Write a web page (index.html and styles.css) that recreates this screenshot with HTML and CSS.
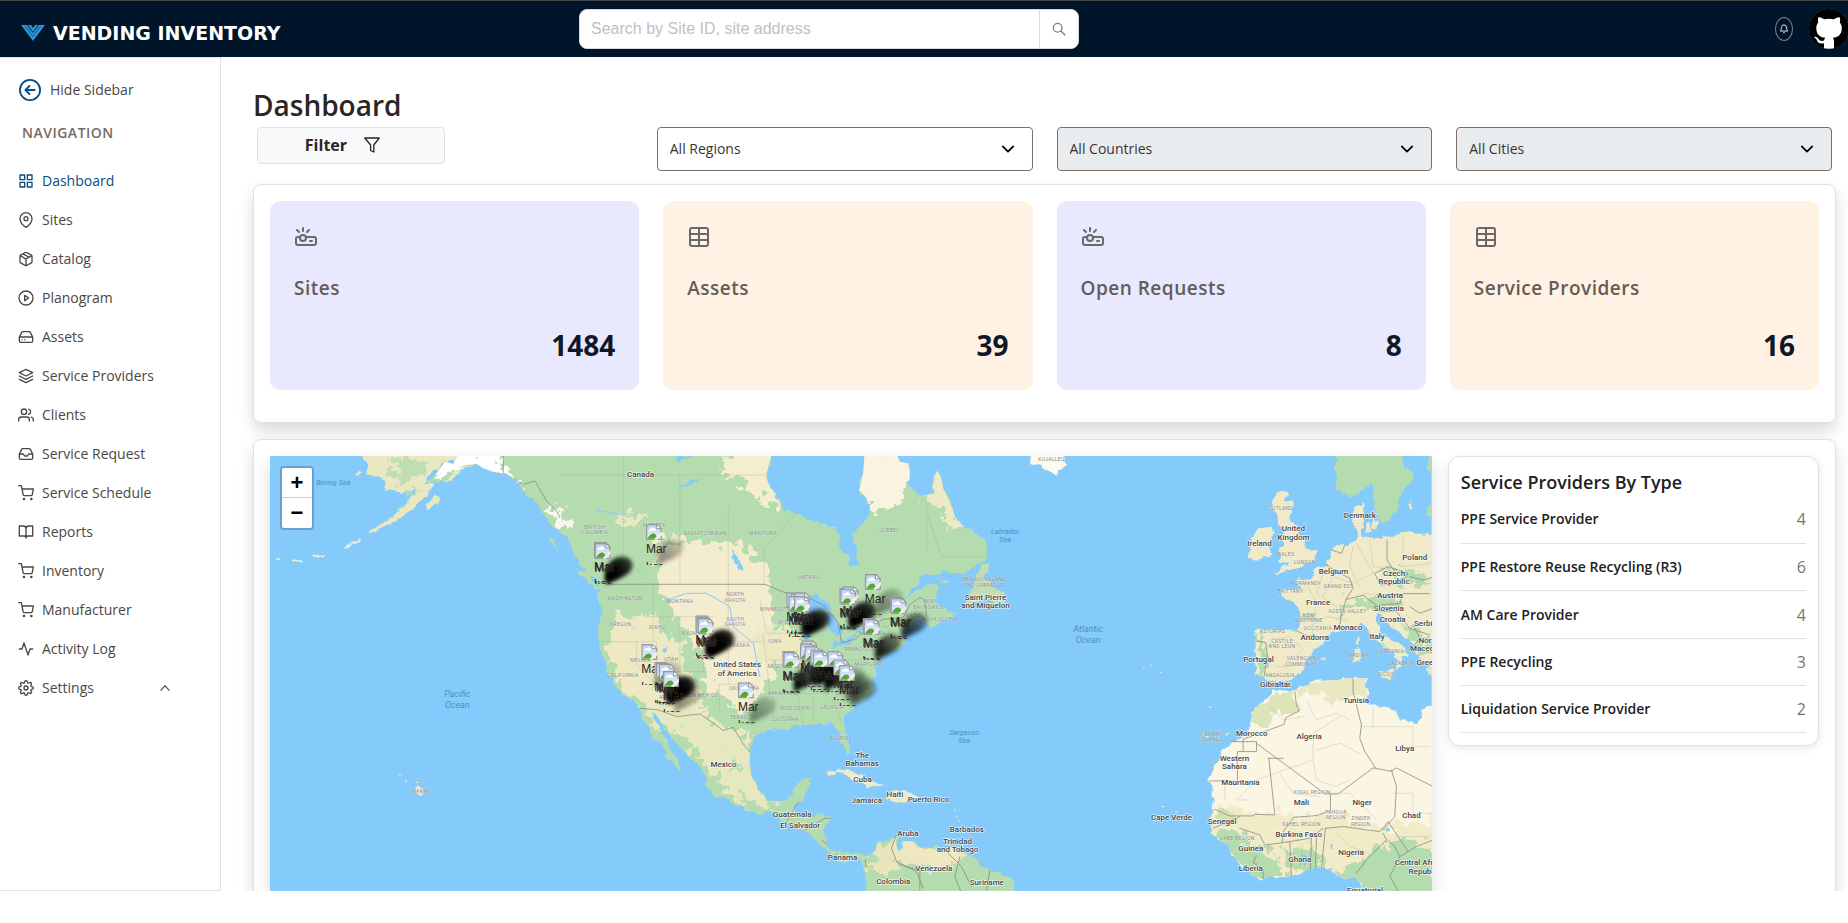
FILE: index.html
```html
<!DOCTYPE html>
<html lang="en">
<head>
<meta charset="utf-8">
<meta name="viewport" content="width=device-width, initial-scale=1">
<title>Vending Inventory - Dashboard</title>
<link rel="stylesheet" href="styles.css">
</head>
<body>
<div class="app">
  <header class="topbar">
    <a class="brand" href="#">
      <svg class="brand-mark" viewBox="0 0 24 16" aria-hidden="true"><path d="M0 0h6l6 8 6-8h6L12 16z" fill="#2f93d8"/><path d="M7 0h3l2 3 2-3h3l-5 7z" fill="#2f93d8"/><path d="M4.500 1.500 12 11.500l7.500-10" fill="none" stroke="#0d4c7c" stroke-width=".8"/></svg>
      <span>VENDING INVENTORY</span>
    </a>
    <form class="search">
      <input type="text" aria-label="Search" placeholder="Search by Site ID, site address">
      <button type="button" aria-label="Search"><svg viewBox="0 0 16 16"><circle cx="6.500" cy="6.500" r="5"/><path d="m10.200 10.200 4.600 4.600"/></svg></button>
    </form>
    <div class="user-tools">
      <button class="bell" type="button" aria-label="Notifications"><svg viewBox="0 0 24 24"><path d="M18 8a6 6 0 0 0-12 0c0 7-3 9-3 9h18s-3-2-3-9M13.700 21a2 2 0 0 1-3.400 0"/></svg></button>
      <button class="avatar" type="button" aria-label="Account"><svg viewBox="0 0 16 16"><circle cx="8" cy="8" r="7.900" fill="#fff"/><path fill="#000" d="M8 0C3.580 0 0 3.580 0 8c0 3.540 2.290 6.530 5.470 7.590.4.070.55-.17.55-.38 0-.19-.01-.82-.01-1.490-2.010.37-2.530-.49-2.690-.94-.09-.23-.48-.94-.82-1.130-.28-.15-.68-.52-.01-.53.63-.01 1.080.58 1.230.82.72 1.210 1.870.87 2.330.66.070-.52.28-.87.51-1.070-1.780-.2-3.640-.89-3.640-3.950 0-.87.31-1.590.82-2.150-.08-.2-.36-1.020.08-2.120 0 0 .67-.21 2.200.82.64-.18 1.320-.27 2-.27s1.360.09 2 .27c1.530-1.040 2.200-.82 2.200-.82.44 1.100.16 1.920.08 2.120.51.56.82 1.270.82 2.150 0 3.070-1.870 3.750-3.650 3.950.29.25.54.73.54 1.480 0 1.070-.01 1.930-.01 2.200 0 .21.15.46.55.38A8.010 8.010 0 0 0 16 8c0-4.420-3.580-8-8-8z"/></svg></button>
    </div>
  </header>

  <div class="body">
    <aside class="sidebar">
      <button class="hide-sidebar" type="button"><svg viewBox="0 0 24 24"><circle cx="12" cy="12" r="11"/><path d="M17 12H7.500M11.500 7.500 7 12l4.500 4.500"/></svg>Hide Sidebar</button>
      <h2 class="nav-title">NAVIGATION</h2>
      <nav>
        <a class="active" href="#"><svg viewBox="0 0 24 24"><path d="M3 3h7v7H3zM14 3h7v7h-7zM14 14h7v7h-7zM3 14h7v7H3z"/></svg>Dashboard</a>
        <a href="#"><svg viewBox="0 0 24 24"><path d="M21 10c0 7-9 13-9 13s-9-6-9-13a9 9 0 0 1 18 0z"/><circle cx="12" cy="10" r="3"/></svg>Sites</a>
        <a href="#"><svg viewBox="0 0 24 24"><path d="m16.500 9.400-9-5.190M21 16V8a2 2 0 0 0-1-1.730l-7-4a2 2 0 0 0-2 0l-7 4A2 2 0 0 0 3 8v8a2 2 0 0 0 1 1.730l7 4a2 2 0 0 0 2 0l7-4A2 2 0 0 0 21 16zM3.270 6.960 12 12.010l8.730-5.050M12 22.080V12"/></svg>Catalog</a>
        <a href="#"><svg viewBox="0 0 24 24"><circle cx="12" cy="12" r="10.500"/><path d="m10 8 6 4-6 4z"/></svg>Planogram</a>
        <a href="#"><svg viewBox="0 0 24 24"><path d="M22 12H2M5.450 5.110 2 12v6a2 2 0 0 0 2 2h16a2 2 0 0 0 2-2v-6l-3.450-6.890A2 2 0 0 0 16.760 4H7.240a2 2 0 0 0-1.790 1.110zM6 16h.01M10 16h.01"/></svg>Assets</a>
        <a href="#"><svg viewBox="0 0 24 24"><path d="M12 2 2 7l10 5 10-5zM2 17l10 5 10-5M2 12l10 5 10-5"/></svg>Service Providers</a>
        <a href="#"><svg viewBox="0 0 24 24"><path d="M17 21v-2a4 4 0 0 0-4-4H5a4 4 0 0 0-4 4v2M23 21v-2a4 4 0 0 0-3-3.870M16 3.130a4 4 0 0 1 0 7.750"/><circle cx="9" cy="7" r="4"/></svg>Clients</a>
        <a href="#"><svg viewBox="0 0 24 24"><path d="M22 12h-6l-2 3h-4l-2-3H2M5.450 5.110 2 12v6a2 2 0 0 0 2 2h16a2 2 0 0 0 2-2v-6l-3.450-6.890A2 2 0 0 0 16.760 4H7.240a2 2 0 0 0-1.790 1.110z"/></svg>Service Request</a>
        <a href="#"><svg viewBox="0 0 24 24"><circle cx="9" cy="21" r="1"/><circle cx="20" cy="21" r="1"/><path d="M1 1h4l2.680 13.390a2 2 0 0 0 2 1.610h9.720a2 2 0 0 0 2-1.610L23 6H6"/></svg>Service Schedule</a>
        <a href="#"><svg viewBox="0 0 24 24"><path d="M2 3h6a4 4 0 0 1 4 4v14a3 3 0 0 0-3-3H2zM22 3h-6a4 4 0 0 0-4 4v14a3 3 0 0 1 3-3h7z"/></svg>Reports</a>
        <a href="#"><svg viewBox="0 0 24 24"><circle cx="9" cy="21" r="1"/><circle cx="20" cy="21" r="1"/><path d="M1 1h4l2.680 13.390a2 2 0 0 0 2 1.610h9.720a2 2 0 0 0 2-1.610L23 6H6"/></svg>Inventory</a>
        <a href="#"><svg viewBox="0 0 24 24"><circle cx="9" cy="21" r="1"/><circle cx="20" cy="21" r="1"/><path d="M1 1h4l2.680 13.390a2 2 0 0 0 2 1.610h9.720a2 2 0 0 0 2-1.610L23 6H6"/></svg>Manufacturer</a>
        <a href="#"><svg viewBox="0 0 24 24"><path d="M22 12h-4l-3 9L9 3l-3 9H2"/></svg>Activity Log</a>
        <a href="#"><svg viewBox="0 0 24 24"><circle cx="12" cy="12" r="3"/><path d="M19.400 15a1.650 1.650 0 0 0 .33 1.820l.06.06a2 2 0 1 1-2.830 2.830l-.06-.06a1.650 1.650 0 0 0-2.800 1.170V21a2 2 0 0 1-4 0v-.09A1.650 1.650 0 0 0 7.200 19.700l-.06.06a2 2 0 1 1-2.830-2.830l.06-.06A1.650 1.650 0 0 0 3.200 14H3a2 2 0 0 1 0-4h.09A1.650 1.650 0 0 0 4.300 7.200l-.06-.06a2 2 0 1 1 2.830-2.830l.06.06A1.650 1.650 0 0 0 10 3.200V3a2 2 0 0 1 4 0v.09a1.650 1.650 0 0 0 2.800 1.210l.06-.06a2 2 0 1 1 2.830 2.830l-.06.06A1.650 1.650 0 0 0 20.800 10H21a2 2 0 0 1 0 4h-.09a1.650 1.650 0 0 0-1.510 1z"/></svg>Settings<svg class="caret" viewBox="0 0 24 24"><path d="m5 16 7-8 7 8"/></svg></a>
      </nav>
    </aside>

    <main>
      <h1>Dashboard</h1>
      <div class="filters">
        <button class="filter-btn" type="button">Filter <svg viewBox="0 0 16 16"><path d="M.800 1h14.400L9.800 8v7l-3.200-1.500V8z"/></svg></button>
        <label class="select"><select aria-label="Region"><option>All Regions</option></select><svg viewBox="0 0 16 16"><path d="m2 5 6 6 6-6"/></svg></label>
        <label class="select"><select aria-label="Country" disabled><option>All Countries</option></select><svg viewBox="0 0 16 16"><path d="m2 5 6 6 6-6"/></svg></label>
        <label class="select"><select aria-label="City" disabled><option>All Cities</option></select><svg viewBox="0 0 16 16"><path d="m2 5 6 6 6-6"/></svg></label>
      </div>

      <section class="panel stats">
        <article class="stat lilac"><svg viewBox="0 0 24 24"><path d="M5 7 3 5M9 6V3M13 7l2-2M11.830 12H20a2 2 0 0 1 2 2v4a2 2 0 0 1-2 2H4a2 2 0 0 1-2-2v-4a2 2 0 0 1 2-2h2.170M16 16h2"/><circle cx="9" cy="13" r="3"/></svg><h3>Sites</h3><p>1484</p></article>
        <article class="stat peach"><svg viewBox="0 0 24 24"><rect x="3" y="3" width="18" height="18" rx="2"/><path d="M12 3v18M3 9h18M3 15h18"/></svg><h3>Assets</h3><p>39</p></article>
        <article class="stat lilac"><svg viewBox="0 0 24 24"><path d="M5 7 3 5M9 6V3M13 7l2-2M11.830 12H20a2 2 0 0 1 2 2v4a2 2 0 0 1-2 2H4a2 2 0 0 1-2-2v-4a2 2 0 0 1 2-2h2.170M16 16h2"/><circle cx="9" cy="13" r="3"/></svg><h3>Open Requests</h3><p>8</p></article>
        <article class="stat peach"><svg viewBox="0 0 24 24"><rect x="3" y="3" width="18" height="18" rx="2"/><path d="M12 3v18M3 9h18M3 15h18"/></svg><h3>Service Providers</h3><p>16</p></article>
      </section>

      <section class="panel overview">
        <div class="map">
          <svg class="map-art" viewBox="0 0 3486 1305" role="img" aria-label="Map of sites">
            <defs>
              <filter id="coast" x="-5%" y="-5%" width="110%" height="110%"><feTurbulence type="fractalNoise" baseFrequency=".035" numOctaves="3" seed="4"/><feDisplacementMap in="SourceGraphic" scale="26" xChannelSelector="R" yChannelSelector="G"/></filter>
              <filter id="patch" x="-5%" y="-5%" width="110%" height="110%"><feTurbulence type="fractalNoise" baseFrequency=".03" numOctaves="4" seed="9"/><feDisplacementMap in="SourceGraphic" scale="90" xChannelSelector="R" yChannelSelector="G"/></filter>
              <filter id="speck" x="0" y="0" width="100%" height="100%"><feTurbulence type="fractalNoise" baseFrequency=".035 .03" numOctaves="4" seed="21"/><feColorMatrix values="0 0 0 0 .7  0 0 0 0 .86  0 0 0 0 .67  0 14 0 0 -7.700"/><feComposite in2="SourceGraphic" operator="in"/></filter>
              <filter id="sand" x="0" y="0" width="100%" height="100%"><feTurbulence type="fractalNoise" baseFrequency=".03" numOctaves="4" seed="6"/><feColorMatrix values="0 0 0 0 .93  0 0 0 0 .92  0 0 0 0 .77  0 14 0 0 -8.200"/><feComposite in2="SourceGraphic" operator="in"/></filter>
              <filter id="soft" x="-40%" y="-40%" width="180%" height="180%"><feGaussianBlur stdDeviation="6"/></filter>
              <linearGradient id="fade" x1="0" y1="1" x2="1" y2="0"><stop offset=".3" stop-opacity=".95"/><stop offset="1" stop-opacity=".35"/></linearGradient>
              <linearGradient id="sky" x1="0" y1="0" x2="0" y2="1"><stop offset="0" stop-color="#b9cdf5"/><stop offset="1" stop-color="#eaf1fd"/></linearGradient>
              <path id="america" d="M-300 30L-320 72-345 65-370 100-400 125-345 130-310 95-280 75-250 72-230 85-200 95-170 100-135 118-100 160-70 190-50 220-30 250-5 270 20 290 35 320 45 350 60 372 80 395 105 420 120 440 112 465 122 490 122 530 115 580 120 630 132 660 145 700 165 735 180 765 205 770 225 785 240 805 250 840 270 870 280 900 300 905 315 930 330 965 350 975 365 992 368 985 350 955 335 935 325 905 310 890 300 860 280 835 275 815 290 825 305 850 325 875 345 900 370 930 400 960 430 990 443 1015 437 1035 460 1065 500 1080 540 1100 575 1118 605 1120 630 1110 660 1140 700 1160 730 1170 755 1180 770 1200 790 1225 815 1240 835 1262 855 1272 865 1255 890 1255 908 1275 918 1300 915 1370H1372L1365 1330 1340 1300 1290 1290 1262 1275 1240 1250 1210 1240 1180 1235 1200 1222 1130 1220 1090 1225 1060 1205 1028 1203 1030 1225 1015 1235 1008 1210 1012 1180 980 1200 955 1210 945 1235 925 1250 905 1240 880 1235 850 1245 825 1235 805 1215 795 1190 790 1165 815 1135 790 1122 760 1125 715 1120 700 1112 715 1090 730 1080 735 1060 755 1025 740 1018 710 1028 695 1060 680 1080 650 1085 620 1078 595 1045 575 1010 568 975 572 935 580 900 600 878 625 865 665 868 690 870 700 855 725 855 775 850 795 855 810 850 830 862 838 890 850 920 862 948 870 940 868 905 855 870 848 840 860 815 885 795 915 775 940 750 935 720 950 700 945 680 965 655 995 640 1010 625 1040 605 1030 585 1040 560 1070 540 1095 530 1110 565 1130 560 1150 545 1185 530 1195 515 1160 515 1140 500 1120 480 1135 455 1135 435 1105 430 1075 445 1045 470 1030 485 1050 455 1075 425 1095 405 1150 400 1200 400 1245 380 1280 350 1283 325 1275 300 1245 280 1210 258 1185 230 1175 195 1160 165 1150 145 1143 110 1133 92 1122 110 1118 140 1125 160 1100 165 1080 170 1060 150 1048 130 1050 95 1045 70 1020 65 1005 30H915L910 100 898 150 920 175 933 215 920 240 890 265 880 280 890 330 893 375 875 378 865 350 840 320 833 265 800 255 750 240 710 215 670 210 650 165 630 140 618 110 625 80 640 30Z"/>
              <path id="alaska" d="M303 30L312 60 330 75 322 95 340 112 358 108 372 120 378 150 420 158 462 150 450 180 420 208 400 228 370 245 345 265 325 282 350 275 380 258 410 240 440 222 465 202 480 185 500 165 520 142 515 130 490 128 500 115 530 90 550 68 575 62 590 70 560 100 555 125 580 118 610 90 640 72 640 30Z"/>
              <path id="europe" d="M313 575L330 565 380 570 440 572 450 550 447 515 435 490 405 470 390 458 395 445 430 450 445 440 440 420 470 425 495 405 500 385 530 375 540 355 545 330 560 312 590 315 620 305 622 280 612 250 610 215 625 200 642 187 645 215 640 240 632 265 640 290 660 295 690 290 720 290 760 280 790 275 815 285 860 280V720L835 690 815 660 800 640 790 610 770 590 740 570 715 550 695 525 680 520 678 545 700 575 720 600 750 615 780 640 775 650 755 640 750 660 755 675 740 695 735 690 742 665 735 640 710 625 680 605 660 580 650 560 640 548 615 560 590 572 560 572 530 580 525 605 490 635 465 665 460 690 440 715 400 720 370 730 345 712 318 710 325 670 315 640 318 600Z"/>
              <path id="africa" d="M370 745L400 752 435 755 460 740 510 722 560 720 600 715 655 715 645 735 655 760 640 780 665 800 700 800 735 810 745 830 775 840 800 853 812 830 810 812 830 802 860 800V1370H640L635 1330 610 1310 590 1318 565 1310 545 1285 500 1283 450 1300 420 1310 370 1308 335 1318 300 1300 270 1270 245 1240 235 1215 210 1200 183 1180 190 1160 175 1145 192 1110 195 1080 190 1040 178 1020 195 975 220 940 245 905 270 900 295 880 305 850 305 820 330 790 360 775Z"/>
              <clipPath id="in-america"><use href="#america"/></clipPath>
              <clipPath id="in-europe"><use href="#europe"/></clipPath>
              <clipPath id="in-africa"><use href="#africa"/></clipPath>
              <g id="shadow"><path d="M38 125C26 92 42 54 76 46c32-6 46 20 30 40C88 106 60 108 38 125z" fill="url(#fade)" filter="url(#soft)"/></g>
              <clipPath id="pin-box"><path d="M0 0h75v123H0z"/></clipPath>
              <g id="pin" clip-path="url(#pin-box)">
                <path d="M2 2h32l12 12v32H2z" fill="url(#sky)" stroke="#999" stroke-width="4"/>
                <path d="M8 20q2-8 9-7 4-6 9 0 5 0 5 7z" fill="#fff"/><path d="M4 44q12-20 24-14l8 14z" fill="#55a630"/><path d="M32 2v12h14z" fill="#fff" stroke="#999" stroke-width="3"/><path d="M48 22 24 46l8 2 16-14z" fill="#eef3e4"/>
                <text x="0" y="87">Mar</text><text x="0" y="140">ker</text>
              </g>
            </defs>
            <rect width="3486" height="1305" fill="#84cafa"/>

            <g transform="translate(-30 -48)">
              <g filter="url(#coast)">
                <use href="#alaska" fill="#e9e8c1"/>
                <path d="M283 102l14-8 12 6-12 8zM500 190l25-20 15 5-8 18-25 12z" fill="#e9e8c1"/>
                <path d="M258 320l20-16 18-6-22 18zM160 350l20-5 15 2M98 358h28M48 360h14" fill="none" stroke="#f3f0dc" stroke-width="5"/>
                <path d="M950 388l25 7 30 30 25 20-20 5-30-25zM868 292l20 2-3 26 12 26-22-30z" fill="#b4dcae"/>
                <path d="M476 1044l14 6-6 16-10-8zM440 1018h5M412 1008h5M467 1030h7" fill="#eee8c4" stroke="#eee8c4" stroke-width="4"/>
              </g>
              <g filter="url(#patch)" fill="#b4dcae"><path d="M395 60l60-10 60 20-30 40-60 30-40-40zM450 160l40-20-60 70z" opacity=".8"/></g>
            </g>

            <g transform="translate(870 -48)">
              <g filter="url(#coast)">
                <use href="#america" fill="#b4dcae"/>
              </g>
              <g clip-path="url(#in-america)">
                <g filter="url(#patch)">
                  <path d="M-370 30h140l60 40 50 60 40 50-20 20-50-60-70-40-100-10-60 20z" fill="#fff"/>
                  <path d="M-20 180l30 40 20 60-30-10-30-50z" fill="#f8f7ee"/>
                  <path d="M480 30h180l-10 60 10 120-50-30-60-50-60-40z" fill="#f4edce"/>
                  <path d="M860 30h200l-5 110-50 70-90-5-40-55z" fill="#faf3e0"/>
                  <path d="M1110 80h45l30 100 20 70-30 30-30-60-50-50z" fill="#eee9c6"/>
                  <path d="M290 290l100 10 60 20 90-20 60 70 30 60 10 100 10 80-10 90-40 60-30 60-60-20-60-60-30-100-60-60-40-100-30-60z" fill="#f4ecce"/>
                  <path d="M150 520l130 10 80 80 50 150 50 100 120 30-40 140-80-80-80-90-130-40-50-80-60-100z" fill="#ece9c3"/>
                  <path d="M130 520h40l30 150 40 90-30 20-50-80z" fill="#efe9c2"/>
                  <path d="M250 800l180 20 90 60 60 60 10 90 60 60-60 10-90-40-60-80-60-80-90-40z" fill="#e7e8bf"/>
                  <path d="M590 560l120 10 10 90-60 30-70-20z" fill="#ece9c3"/>
                  <path d="M180 230l60-10 20 30-70 10z" fill="#e9e8c1"/>
                  <path d="M1000 1190l90 30 180 10-60 30-70 20-90 10-60-40z" fill="#eee7c0"/>
                  <path d="M930 1230l60-30 20 50-30 60-40-20z" fill="#e9e6bd"/>
                </g>
                <g filter="url(#patch)" fill="#b4dcae">
                  <path d="M140 430l60 20 30 100-60-30-20 80-40-20zM280 440l40 80 60 40 20 100-50-60-50-20zM400 640l50 60-20 80-40-80zM340 860l40 20 40 80 60 90-70-60-50-80zM510 930l20 50-20 20z"/>
                </g>
                <use href="#america" filter="url(#sand)"/>
                <g filter="url(#coast)" fill="#84cafa">
                  <path d="M720 470l40-8 50 30 15 20-40-8-30 10zM745 520l22-6-6 50-16 40-14-10 8-50zM790 510l35 15 25 60-18 5-26-30zM818 604l40-4 34-20-20 28-48 12zM890 566l40-6-10 14-30 4zM515 330l20 20 15 40-16-8zM375 130l60-20-30 20-60 20zM305 625l16-8 4 20-12 8zM330 45h60l-30 25z"/>
                </g>
                <g class="state">
                  <path d="M190 48v300l90 85M360 105v328M505 200v233M0 105h620M612 435v-110l105-115M360 530v75M460 530H265M460 605h150M280 605V433M120 605h170v90H430M230 605v70l60 60M505 433v300M360 605v190M430 605v90M478 733v85M478 733h110M600 480l20 100h95M610 580l20 180h180M625 660h300M700 700l30 150M760 770v80M815 770l30 80M640 770v60h55M870 560h110M960 530l40 60M1105 230l40 120h130M1100 160v170"/>
                </g>
                <path class="border" d="M140 433h475l60 25 60 10 60 30 40 50 10 60 40-10 40-35 45-25 60-5 20-40 30-20 15 5 5 50M240 805l55 5 55 20 70-8 50 35 20 15 30-10 30 50 20 25 10 8M680 1145l20-30 20-20M700 1112l15-25M735 1170l60-35 22 0M785 1200l15 12M820 1262l10-20M915 1260l4 20M1010 1185l-15 40 15 40 60 30 20 50M1145 1220l60 60 30 60M1290 1290l-10 60M1200 1250l-15 60 20 50M1080 1353v-60l-60-20"/>
                <path d="M-170 48v50l60 35 35-10 35 60 30 30 10 20" class="border"/>
                <path d="M320 480l60-20h60l70 40 10 60 60 50 20 100M210 230l-100-20" fill="none" stroke="#84cafa" stroke-width="3"/>
              </g>
              <g filter="url(#coast)">
                <path d="M797 1003l33-15 40 4 40 20 40 16 20 12-50 5-10-15-30-8-40-26-36 14zM968 1078l25-3 7-25 40 5 30 20-30 5-20 10zM893 1076l22 2-8 8zM1058 1074l22 0-2 10h-20z" fill="#eee9c6"/>
              </g>
            </g>

            <g transform="translate(1770 -48)">
              <g filter="url(#coast)">
                <path d="M498 30l22 42 30 8 20 20 20 10 10-15 15-15V30z" fill="#fdfaf2"/>
                <path d="M290 512l30-22 20-50 15-40 17-30 16-2-8 27-10 20 30 25 30 15 5 30-15 10-30-15-40 10-30 10zM235 415l45 15-20 0z" fill="#c3ddb0"/>
              </g>
              <path d="M283 1112l4-4M296 1140l3 4M290 1128l2 4M850 682h4M870 676h4M900 697h5" stroke="#f3ecd2" stroke-width="3"/>
            </g>

            <g transform="translate(2640 -48)">
              <g filter="url(#coast)">
                <use href="#europe" fill="#f0eac8"/>
                <use href="#africa" fill="#fbf5e3"/>
                <path d="M555 30l5 70 5 50 35 22 40-17 25-25v35l15 50 10 35 25-5 20-20 15-25v-40l40-40-5-30-25-10 2-50zM846 30l-11 30v25l25 5V30zM860 180l-28 20-2 30 30 15z" fill="#b4dcae"/>
                <path d="M380 160l30-7-5 27 30 5-5 25-20 25 25 10 10 30 20 35v15l30 5-3 30-22 15-40 10-30 10-25 8 20-23 25-10-35-10 10-15-10-10 25-20-15-25 5-15-15-25-5-35-15-15zM330 265l35-5 5 25-10 30v30l-50 17-18-7 13-25-7-30 12-12z" fill="#f0eac8"/>
                <path d="M612 625l20-3-2 43-18 3zM620 590l10-2-2 27-10-3zM683 695l47-5-8 30-22-8zM645 255l14-4 6 16-14 6zM670 240l14 4-4 22-14-4zM512 656l12 0-2 8h-8zM780 182l8-4-4 24-8 0zM445 90l4 10M350 165l10 30M545 235h1" fill="#ece9c3"/>
              </g>
              <g clip-path="url(#in-europe)">
                <use href="#europe" filter="url(#speck)"/>
                <g filter="url(#patch)" fill="#b4dcae"><path d="M320 590l30-5v120h-25zM440 500l50 20 10 40-50-10zM570 480l100 0 60-20 20 30-60 20-60-10-60 20zM700 400l60-10 80 30v20l-80-10zM740 540l60 20 60 60v60l-60-60zM650 570l50 40-10 5z"/></g>
                <path class="state" d="M360 600l60-10 40 40-60 50M380 680h50M470 430l30 60-10 60M520 400l-20 60 60 40M610 320l-10 60 30 60M660 300l10 80 50 10M760 290v90l80-10M640 460l60 10M560 540l40-30M780 430l60-10M480 560l50-30 60 10M620 310l50 90-60 30-60-20-30 60"/>
                <path class="border" d="M318 603l30 5 5 40-10 60M440 572l30 15 55 5M530 375l30 20 40 20 10 30-20 30-15 50-5 30M712 300v60l20 30M675 400l40-20 60 20-20 30-60 5zM590 478l50-12 40 30 70-5 10-30 80 0M780 410l40 10 30-8M690 515l50 0 40 50 60 20M780 500l30 20 40-15M545 330l30 10 10-25M790 555l20 40-20 25 60 20"/>
              </g>
              <g clip-path="url(#in-africa)">
                <g filter="url(#patch)">
                  <path d="M360 770l50-20 40 60-60 10-60 40-60-10 10-40z" fill="#ddE4b8"/><path d="M440 730l240-30-40 70-60 10-110-20z" fill="#e9e8c3"/>
                  <path d="M160 1100l220 15 200 20 130 30 160-20v240H160z" fill="#f1ebc8"/>
                  <path d="M170 1175l90 0 40 40 60 10 40 100-80 10-160-140zM410 1225l60-10 50 60-100 20zM560 1290l80-30 60-40 60-20 100 10v180H560z" fill="#b4dcae"/>
                  <path d="M185 1110l50 0 20 40-60 0z" fill="#cfe2b0"/>
                </g>
                <path class="state" d="M360 800l40 40 60-10M470 780l30 60 60-20 40 20M300 1080h-40l60-60 170-60v-80l80-50M490 960l10 60 60 20 40-20M500 930l70-20 60 30M390 1000l40 60 80 10M540 1060h60l80 80M730 1060h60v60h60M640 860h150v60h50M670 800v60M225 1080v-60M420 1170l40 60M560 1180l40 40 60 20 40-20M640 1230v60M740 1190h100M350 1210l40 60M300 1240l30 40M460 1210l-10 80"/>
                <path class="border" d="M435 755l5 40 8 18-40 20-5 20-40 15-83 30v35M245 905h75v30h-57v88h-85M320 910l190 140 15 12h40l105-78 55 10 15-10 106 54M355 955h45M357 955l18 170-60-2-5 5h-70l-50-22M610 715v40l15 60 10 40-5 40 15 40 20 30 12 18M725 990l15 50-5 90-35 40M542 1062v50l-40 15-70 5-30 40-5 35M530 1165l50-5 110 15 25-30 60 90M527 1165l-12 120M500 1190l-3 100M485 1190l-3 100M420 1205l5 105M270 1130l-80 35M345 1215l-15-30-60-20M350 1215l70-10 60-10 40-30M340 1318l0-30-30-20 10-20M700 1180l10 20-60 60-30 40M715 1200l20 20 15 30-30 60 30 50M750 1250l50-30 50-20"/>
              </g>
              <path d="M155 885h6M170 890h5M228 886l8-6M205 895h6M180 802h3M38 1100h4M78 1116h4" stroke="#f3ecd2" stroke-width="4"/>
              <path d="M455 1240l18 10-6 30-8-10zM543 1212h5v16h-5zM708 1166h12v8h-12z" fill="#84cafa"/>
            </g>

            <g class="sea" transform="translate(-30 -48)"><text x="220" y="134" class="mid">Bering Sea</text><text x="592" y="771">Pacific</text><text x="592" y="803">Ocean</text></g>
            <g class="region" transform="translate(-30 -48)"><text x="485" y="1059">HAWAII</text></g>
            <g class="region" transform="translate(870 -48)">
              <text x="104" y="267">BRITISH</text><text x="104" y="283">COLUMBIA</text><text x="282" y="262">ALBERTA</text><text x="435" y="286">SASKATCHEWAN</text><text x="609" y="286">MANITOBA</text><text x="748" y="416">ONTARIO</text><text x="989" y="276">QUEBEC</text>
              <text x="195" y="481">WASHINGTON</text><text x="360" y="489">MONTANA</text><text x="526" y="469">NORTH</text><text x="526" y="485">DAKOTA</text><text x="526" y="542">SOUTH</text><text x="526" y="558">DAKOTA</text><text x="182" y="558">OREGON</text><text x="291" y="567">IDAHO</text><text x="402" y="585">WYOMING</text><text x="528" y="620">NEBRASKA</text><text x="645" y="608">IOWA</text><text x="646" y="512">MINNESOTA</text><text x="700" y="552">WISCONSIN</text><text x="242" y="666">NEVADA</text><text x="334" y="664">UTAH</text><text x="189" y="711">CALIFORNIA</text><text x="332" y="776">ARIZONA</text><text x="424" y="772">NEW MEXICO</text><text x="553" y="750">OKLAHOMA</text><text x="535" y="836">TEXAS</text><text x="666" y="766">ARKANSAS</text><text x="662" y="685">MISSOURI</text><text x="706" y="810">MISSISSIPPI</text><text x="674" y="843">LOUISIANA</text><text x="816" y="808">GEORGIA</text><text x="844" y="900">FLORIDA</text><text x="914" y="634">PENNSYLVANIA</text><text x="938" y="585">NEW YORK</text><text x="928" y="679">MARYLAND</text><text x="1060" y="530">MAINE</text><text x="1107" y="490">NEW</text><text x="1107" y="506">BRUNSWICK</text><text x="1140" y="543">NOVA SCOTIA</text><text x="1272" y="424">NEWFOUNDLAND</text><text x="1272" y="440">AND LABRADOR</text><text x="866" y="764">CAROLINA</text>
            </g>
            <g class="country" transform="translate(870 -48)">
              <text x="242" y="110">Canada</text><text x="532" y="682">United States</text><text x="532" y="709">of America</text><text x="491" y="981">Mexico</text><text x="907" y="954">The</text><text x="907" y="978">Bahamas</text><text x="908" y="1026">Cuba</text><text x="921" y="1088">Jamaica</text><text x="1005" y="1072">Haiti</text><text x="1106" y="1086">Puerto Rico</text><text x="697" y="1130">Guatemala</text><text x="721" y="1164">El Salvador</text><text x="848" y="1259">Panama</text><text x="1044" y="1187">Aruba</text><text x="1122" y="1292">Venezuela</text><text x="1000" y="1332">Colombia</text><text x="1281" y="1335">Suriname</text><text x="1221" y="1175">Barbados</text><text x="1193" y="1211">Trinidad</text><text x="1193" y="1235">and Tobago</text><text x="1277" y="480">Saint Pierre</text><text x="1277" y="504">and Miquelon</text>
            </g>
            <g class="sea" transform="translate(1770 -48)"><text x="436" y="281" class="mid">Labrador</text><text x="436" y="306" class="mid">Sea</text><text x="685" y="577">Atlantic</text><text x="685" y="609">Ocean</text><text x="313" y="884" class="mid">Sargasso</text><text x="313" y="909" class="mid">Sea</text></g>
            <g class="region" transform="translate(1770 -48)"><text x="575" y="63">KUJALLEQ</text></g>
            <g class="region" transform="translate(2640 -48)">
              <text x="388" y="209">SCOTLAND</text><text x="407" y="347">WALES</text><text x="465" y="371">LONDON</text><text x="469" y="434">NORMANDY</text><text x="566" y="443">GRAND EST</text><text x="422" y="459">BRITTANY</text><text x="476" y="530">NEW</text><text x="476" y="546">AQUITAINE</text><text x="593" y="520">AOSTA VALLEY</text><text x="504" y="569">OCCITANIA</text><text x="368" y="579">ASTURIAS</text><text x="397" y="608">CASTILE</text><text x="397" y="624">AND LEÓN</text><text x="455" y="661">VALENCIAN</text><text x="455" y="677">COMMUNITY</text><text x="391" y="711">ANDALUSIA</text><text x="624" y="652">SARDINIA</text><text x="722" y="638">CAMPANIA</text><text x="752" y="675">CALABRIA</text><text x="709" y="708">SICILY</text><text x="185" y="888">CANARY</text><text x="185" y="904">ISLANDS</text><text x="487" y="1062">KIDAL REGION</text><text x="558" y="1122">TAHOUA</text><text x="558" y="1138">REGION</text><text x="633" y="1141">ZINDER</text><text x="633" y="1157">REGION</text><text x="455" y="1159">SAHEL REGION</text><text x="263" y="1199">LABÉ REGION</text>
            </g>
            <g class="country" transform="translate(2640 -48)">
              <text x="630" y="234">Denmark</text><text x="431" y="274">United</text><text x="431" y="300">Kingdom</text><text x="329" y="319">Ireland</text><text x="795" y="360">Poland</text><text x="551" y="401">Belgium</text><text x="733" y="407">Czech</text><text x="733" y="431">Republic</text><text x="505" y="495">France</text><text x="721" y="474">Austria</text><text x="717" y="513">Slovenia</text><text x="729" y="546">Croatia</text><text x="595" y="571">Monaco</text><text x="495" y="600">Andorra</text><text x="682" y="596">Italy</text><text x="827" y="558">Serbia</text><text x="837" y="608">North</text><text x="840" y="632">Macedonia</text><text x="838" y="676">Greece</text><text x="326" y="665">Portugal</text><text x="377" y="741">Gibraltar</text><text x="619" y="788">Tunisia</text><text x="306" y="887">Morocco</text><text x="478" y="897">Algeria</text><text x="765" y="932">Libya</text><text x="254" y="964">Western</text><text x="254" y="988">Sahara</text><text x="272" y="1034">Mauritania</text><text x="455" y="1096">Mali</text><text x="637" y="1096">Niger</text><text x="785" y="1133">Chad</text><text x="65" y="1141">Cape Verde</text><text x="217" y="1152">Senegal</text><text x="447" y="1192">Burkina Faso</text><text x="303" y="1232">Guinea</text><text x="450" y="1266">Ghana</text><text x="604" y="1246">Nigeria</text><text x="303" y="1292">Liberia</text><text x="815" y="1276">Central African</text><text x="823" y="1302">Republic</text><text x="646" y="1360">Equatorial</text>
            </g>

            <g transform="translate(870 -48)">
              <use href="#shadow" x="102" y="305"/><use href="#shadow" x="105" y="308"/><use href="#shadow" x="258" y="252" opacity=".4"/><use href="#shadow" x="250" y="622" opacity=".4"/>
              <use href="#shadow" x="283" y="664"/><use href="#shadow" x="290" y="668"/><use href="#shadow" x="296" y="666"/><use href="#shadow" x="309" y="693" opacity=".4"/>
              <use href="#shadow" x="402" y="526"/><use href="#shadow" x="412" y="530"/><use href="#shadow" x="408" y="524"/><use href="#shadow" x="534" y="727" opacity=".4"/>
              <use href="#shadow" x="690" y="462"/><use href="#shadow" x="700" y="467"/><use href="#shadow" x="667" y="633"/><use href="#shadow" x="720" y="610"/><use href="#shadow" x="733" y="615"/><use href="#shadow" x="758" y="630"/><use href="#shadow" x="802" y="638" opacity=".5"/><use href="#shadow" x="822" y="658" opacity=".5"/><use href="#shadow" x="837" y="675" opacity=".6"/>
              <use href="#shadow" x="832" y="440"/><use href="#shadow" x="838" y="442"/><use href="#shadow" x="915" y="402" opacity=".4"/><use href="#shadow" x="990" y="474" opacity=".8"/><use href="#shadow" x="911" y="537" opacity=".9"/>
            </g>
            <g class="pins" transform="translate(870 -48)">
              <use href="#pin" x="102" y="305"/><use href="#pin" x="104" y="309"/><use href="#pin" x="258" y="252"/><use href="#pin" x="244" y="612"/>
              <use href="#pin" x="283" y="666"/><use href="#pin" x="288" y="668"/><use href="#pin" x="296" y="671"/><use href="#pin" x="309" y="693"/>
              <use href="#pin" x="406" y="526"/><use href="#pin" x="409" y="531"/><use href="#pin" x="413" y="534"/><use href="#pin" x="534" y="727"/>
              <use href="#pin" x="679" y="457"/><use href="#pin" x="692" y="460"/><use href="#pin" x="703" y="457"/><use href="#pin" x="685" y="468"/><use href="#pin" x="702" y="468"/>
              <use href="#pin" x="838" y="443"/><use href="#pin" x="848" y="439"/><use href="#pin" x="841" y="446"/><use href="#pin" x="915" y="402"/><use href="#pin" x="990" y="470"/><use href="#pin" x="992" y="474"/><use href="#pin" x="908" y="534"/><use href="#pin" x="911" y="537"/>
              <use href="#pin" x="667" y="633"/><use href="#pin" x="670" y="636"/><use href="#pin" x="724" y="601"/><use href="#pin" x="720" y="610"/><use href="#pin" x="733" y="618"/><use href="#pin" x="751" y="628"/><use href="#pin" x="758" y="633"/><use href="#pin" x="802" y="633"/><use href="#pin" x="820" y="658"/><use href="#pin" x="837" y="675"/>
            </g>
          </svg>
          <div class="zoom"><button type="button" aria-label="Zoom in">+</button><button type="button" aria-label="Zoom out">−</button></div>
        </div>
        <aside class="types">
          <h2>Service Providers By Type</h2>
          <dl>
            <div><dt>PPE Service Provider</dt><dd>4</dd></div>
            <div><dt>PPE Restore Reuse Recycling (R3)</dt><dd>6</dd></div>
            <div><dt>AM Care Provider</dt><dd>4</dd></div>
            <div><dt>PPE Recycling</dt><dd>3</dd></div>
            <div><dt>Liquidation Service Provider</dt><dd>2</dd></div>
          </dl>
        </aside>
      </section>
    </main>
  </div>
</div>
</body>
</html>
```
FILE: styles.css
```css
* { box-sizing: border-box; }
body { margin: 0; background: #fff; color: #2b2523; font: 14px/20px "Open Sans", "Noto Sans", sans-serif; }
h1, h2, h3, p, dl, dd { margin: 0; }
button { font: inherit; color: inherit; padding: 0; cursor: pointer; }
a { color: inherit; text-decoration: none; }
svg { display: block; flex: none; fill: none; stroke: currentColor; stroke-width: 2; stroke-linecap: round; stroke-linejoin: round; }

.app { display: flex; flex-direction: column; height: calc(100vh - 32px); overflow: hidden; }

/* Top bar */
.topbar { flex: none; display: grid; grid-template-columns: 1fr minmax(0, 500px) 1fr; align-items: center; height: 57px; background: #001529; border-top: 1px solid #45474a; }
.brand { display: flex; align-items: center; gap: 8px; padding: 8px 0 0 21px; color: #fff; font: bold 19px/20px "DejaVu Sans", sans-serif; white-space: nowrap; }
.brand-mark { width: 24px; height: 16px; stroke: none; }
.search { display: flex; width: 500px; height: 40px; margin-left: -95px; background: #fff; border: 1px solid #d9d9d9; border-radius: 8px; overflow: hidden; }
.search input { flex: 1; min-width: 0; border: 0; outline: 0; padding: 0 11px; background: none; font: 16px/24px "Liberation Sans", sans-serif; }
.search input::placeholder { color: #bfbfbf; opacity: 1; }
.search button { display: grid; place-items: center; width: 39px; border: 0; border-left: 1px solid #d9d9d9; background: #fff; color: #808080; }
.search svg { width: 14px; height: 14px; stroke-width: 1.5; }
.user-tools { display: flex; justify-content: flex-end; align-items: center; gap: 16px; margin-right: -1px; }
.bell { display: grid; place-items: center; width: 18px; height: 24px; border: 1px solid #7c858e; border-radius: 50%; background: none; color: #fff; }
.bell svg { width: 10px; height: 10px; }
.avatar { border: 0; background: none; }
.avatar svg { width: 40px; height: 40px; stroke: none; }

/* Sidebar */
.body { flex: 1; min-height: 0; display: flex; }
.sidebar { flex: none; width: 221px; border: 1px solid #dee2e6; border-left: 0; padding-top: 21px; color: #4c4744; }
.hide-sidebar { display: flex; align-items: center; gap: 9px; height: 22px; padding-left: 19px; border: 0; background: none; }
.hide-sidebar svg { width: 22px; height: 22px; color: #084c82; }
.nav-title { margin: 22px 0 18px; padding-left: 22px; font-size: 14px; line-height: 20px; font-weight: 600; letter-spacing: .5px; color: #756b65; }
.sidebar nav a { display: flex; align-items: center; gap: 8px; height: 39px; padding-left: 18px; }
.sidebar nav svg { width: 16px; height: 16px; }
.sidebar nav .active { color: #084c82; }
.sidebar nav .caret { width: 14px; height: 14px; margin: 0 48px 0 auto; }

/* Main */
main { flex: 1; min-width: 0; padding: 29px 12px 0 32px; }
h1 { font-size: 28px; line-height: 38px; font-weight: 600; margin-bottom: 3px; }
.filters { display: grid; grid-template-columns: repeat(4, 1fr); gap: 24px; align-items: start; padding: 0 4px; margin-bottom: 13px; }
.filter-btn { display: flex; align-items: center; justify-content: center; gap: 17px; width: 50%; height: 37px; padding: 0 17px 1px 0; border: 1px solid #dee2e6; border-radius: 4px; background: #f8f9fa; font-size: 16px; font-weight: 700; }
.filter-btn svg { width: 16px; height: 16px; stroke-width: 1.3; }
.select { display: grid; align-items: center; }
.select > * { grid-area: 1 / 1; }
.select select { appearance: none; width: 100%; height: 44px; padding: 0 12px; border: 1px solid #7a6f69; border-radius: 4px; background: #fff; color: #3a3431; font: inherit; opacity: 1; }
.select select:disabled { background: #e9ecef; }
.select svg { justify-self: end; width: 14px; height: 14px; margin-right: 18px; color: #000; pointer-events: none; }
.panel { border: 1px solid #dee2e6; border-radius: 8px; background: #fff; box-shadow: 0 8px 16px rgba(0, 0, 0, .15); padding: 16px; }
.stats { display: grid; grid-template-columns: repeat(4, 1fr); gap: 24px; padding-bottom: 32px; margin-bottom: 16px; }
.stat { padding: 24px; border-radius: 10px; }
.lilac { background: #e8e8ff; }
.peach { background: #fff1e3; }
.stat svg { width: 24px; height: 24px; color: #6a6868; }
.stat h3 { margin: 24px 0 21px; font-size: 19px; line-height: 30px; font-weight: 600; letter-spacing: .5px; color: #655c57; }
.stat p { font-size: 28px; line-height: 42px; font-weight: 700; text-align: right; color: #101828; }

/* Map and provider list */
.overview { display: grid; grid-template-columns: 75% 25%; align-items: start; }
.map { position: relative; box-shadow: 0 8px 16px rgba(0, 0, 0, .15); }
.map-art { width: 100%; height: auto; stroke: none; }
.map-art text { text-anchor: middle; font-family: Roboto, sans-serif; paint-order: stroke; stroke-linejoin: round; }
.country text { font-size: 24px; font-weight: 500; fill: #454545; stroke: rgba(255, 255, 255, .8); stroke-width: 4px; }
.region text { font-size: 15px; fill: #7f8583; stroke: rgba(255, 255, 255, .5); stroke-width: 2px; letter-spacing: 1px; }
.sea text { font-size: 27px; font-style: italic; fill: #4a93bd; }
.sea .mid { font-size: 22px; }
.map-art .state { fill: none; stroke: #9aa08c; stroke-opacity: .4; stroke-width: 2; }
.map-art .border { fill: none; stroke: #8b8b80; stroke-opacity: .8; stroke-width: 3; }
.map-art #pin text { text-anchor: start; font: 36px "Liberation Sans", sans-serif; fill: #2a2423; }
.zoom { position: absolute; top: 10px; left: 10px; width: 34px; border: 2px solid rgba(0, 0, 0, .2); border-radius: 4px; background-clip: padding-box; }
.zoom button { display: block; width: 30px; height: 30px; border: 0; background: #fff; color: #000; font: bold 22px/30px "Liberation Sans", sans-serif; }
.zoom button:first-child { border-bottom: 1px solid #ccc; border-radius: 2px 2px 0 0; }
.zoom button:last-child { border-radius: 0 0 2px 2px; }
.types { margin-left: 16px; padding: 12px; border: 1px solid #dee2e6; border-radius: 12px; box-shadow: 0 2px 8px rgba(0, 0, 0, .1); background: #fff; color: #212121; }
.types h2 { font-size: 18px; line-height: 26px; font-weight: 600; }
.types dl div { display: flex; justify-content: space-between; align-items: center; height: 47px; border-bottom: 1px solid #dee2e6; }
.types dl div:first-child { height: 49px; }
.types dl div:nth-child(3) { height: 48px; }
.types dt { font-weight: 600; }
.types dd { font-size: 16px; color: #757575; }
```
